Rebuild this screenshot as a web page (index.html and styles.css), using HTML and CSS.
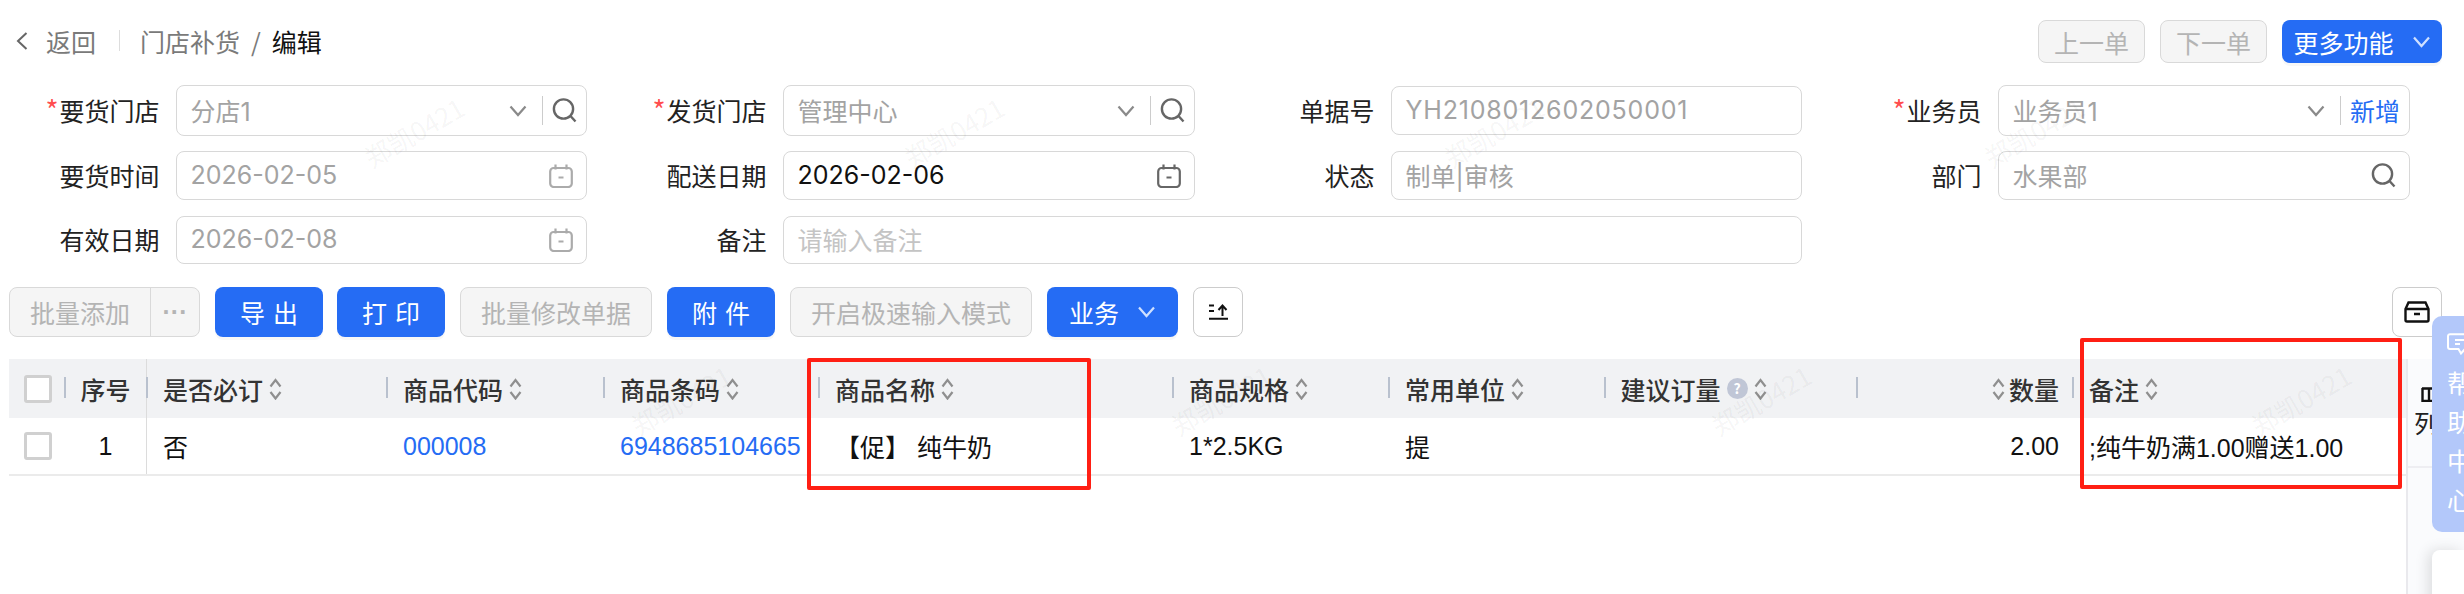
FILE: index.html
```html
<!DOCTYPE html>
<html lang="zh-CN">
<head>
    <meta charset="UTF-8">
    <title>门店补货 / 编辑</title>
    <link rel="stylesheet" href="styles.css">
</head>
<body>
    <svg class="sprite" aria-hidden="true">
        <symbol id="i-chevron" viewBox="0 0 18 12"><path d="M1.5 1.5 9 10l7.5-8.5" fill="none" stroke="currentColor" stroke-width="2.2"/></symbol>
        <symbol id="i-search" viewBox="0 0 25 25"><circle cx="11.5" cy="11" r="9.6" fill="none" stroke="currentColor" stroke-width="2.4"/><path d="m18.5 18 5 5.5" fill="none" stroke="currentColor" stroke-width="2.4"/></symbol>
        <symbol id="i-calendar" viewBox="0 0 24 24"><rect x="1.2" y="4" width="21.6" height="19" rx="3.5" fill="none" stroke="currentColor" stroke-width="2.2"/><path d="M6.5 0.5v5M17.5 0.5v5M9.5 13.5h5" fill="none" stroke="currentColor" stroke-width="2.2"/></symbol>
        <symbol id="i-sort" viewBox="0 0 13 22"><path d="M1.5 8.5 6.5 2l5 6.5M1.5 14 6.5 20.5l5-6.5" fill="none" stroke="currentColor" stroke-width="2.2"/></symbol>
    </svg>

    <div class="page">
        <div class="topbar">
            <div class="crumbs">
                <svg class="crumb-back" width="12" height="18" viewBox="0 0 12 18"><path d="M10.5 1 2 9l8.5 8" fill="none" stroke="currentColor" stroke-width="2"/></svg>
                <span class="crumb-link">返回</span>
                <span class="crumb-divider"></span>
                <span class="crumb-link">门店补货</span>
                <span class="crumb-slash">/</span>
                <span class="crumb-current">编辑</span>
            </div>
            <div class="topbar-actions">
                <button class="btn btn-disabled btn-nav">上一单</button>
                <button class="btn btn-disabled btn-nav">下一单</button>
                <button class="btn btn-primary btn-more">更多功能<svg class="btn-chevron" width="19" height="12"><use href="#i-chevron"/></svg></button>
            </div>
        </div>

        <div class="form-grid">
            <div class="field">
                <label class="field-label"><i>*</i>要货门店</label>
                <div class="input input-tall">
                    <span class="input-value">分店1</span>
                    <svg class="icon-chevron" width="18" height="12"><use href="#i-chevron"/></svg>
                    <span class="input-divider"></span>
                    <svg class="icon-search" width="25" height="25"><use href="#i-search"/></svg>
                </div>
            </div>
            <div class="field">
                <label class="field-label"><i>*</i>发货门店</label>
                <div class="input input-tall">
                    <span class="input-value">管理中心</span>
                    <svg class="icon-chevron" width="18" height="12"><use href="#i-chevron"/></svg>
                    <span class="input-divider"></span>
                    <svg class="icon-search" width="25" height="25"><use href="#i-search"/></svg>
                </div>
            </div>
            <div class="field field-mid">
                <label class="field-label">单据号</label>
                <div class="input"><span class="input-value input-code">YH2108012602050001</span></div>
            </div>
            <div class="field">
                <label class="field-label"><i>*</i>业务员</label>
                <div class="input input-tall">
                    <span class="input-value">业务员1</span>
                    <svg class="icon-chevron" width="18" height="12"><use href="#i-chevron"/></svg>
                    <span class="input-divider"></span>
                    <a class="input-add">新增</a>
                </div>
            </div>

            <div class="field">
                <label class="field-label">要货时间</label>
                <div class="input">
                    <span class="input-value">2026-02-05</span>
                    <svg class="icon-calendar" width="24" height="24"><use href="#i-calendar"/></svg>
                </div>
            </div>
            <div class="field">
                <label class="field-label">配送日期</label>
                <div class="input">
                    <span class="input-value input-filled">2026-02-06</span>
                    <svg class="icon-calendar icon-dark" width="24" height="24"><use href="#i-calendar"/></svg>
                </div>
            </div>
            <div class="field">
                <label class="field-label">状态</label>
                <div class="input"><span class="input-value">制单|审核</span></div>
            </div>
            <div class="field">
                <label class="field-label">部门</label>
                <div class="input">
                    <span class="input-value">水果部</span>
                    <svg class="icon-search icon-alone" width="25" height="25"><use href="#i-search"/></svg>
                </div>
            </div>

            <div class="field">
                <label class="field-label">有效日期</label>
                <div class="input input-short">
                    <span class="input-value">2026-02-08</span>
                    <svg class="icon-calendar" width="24" height="24"><use href="#i-calendar"/></svg>
                </div>
            </div>
            <div class="field field-wide">
                <label class="field-label">备注</label>
                <div class="input input-short"><span class="input-value input-placeholder">请输入备注</span></div>
            </div>
        </div>

        <div class="toolbar">
            <div class="btn-group">
                <button class="btn-group-main">批量添加</button>
                <button class="btn-group-more">···</button>
            </div>
            <button class="btn btn-primary btn-spaced btn-export">导出</button>
            <button class="btn btn-primary btn-spaced">打印</button>
            <button class="btn btn-disabled btn-batch">批量修改单据</button>
            <button class="btn btn-primary btn-spaced">附件</button>
            <button class="btn btn-disabled btn-fast">开启极速输入模式</button>
            <button class="btn btn-primary btn-biz">业务<svg class="btn-chevron" width="19" height="12"><use href="#i-chevron"/></svg></button>
            <button class="btn btn-icon">
                <svg width="20" height="16" viewBox="0 0 20 16"><path d="M1 1.5h5M1 7h5M1 14.8h19M14.5 12V2M10.5 6l4-4.5 4 4.5" fill="none" stroke="#111" stroke-width="2"/></svg>
            </button>
            <button class="btn btn-icon btn-archive">
                <svg width="26" height="22" viewBox="0 0 26 22"><path d="M1.500 8 4.500 1.500h17L24.500 8v11a1.500 1.500 0 0 1-1.500 1.500H3A1.500 1.500 0 0 1 1.500 19zM1.500 8h23M10 13h6" fill="none" stroke="#111" stroke-width="2.400"/></svg>
            </button>
        </div>

        <div class="table-wrap">
            <div class="table">
                <div class="table-row table-head">
                    <div class="cell cell-check"><span class="checkbox"></span></div>
                    <div class="cell cell-seq head-sep">序号</div>
                    <div class="cell head-sep">是否必订<svg class="icon-sort" width="13" height="22"><use href="#i-sort"/></svg></div>
                    <div class="cell head-sep">商品代码<svg class="icon-sort" width="13" height="22"><use href="#i-sort"/></svg></div>
                    <div class="cell head-sep">商品条码<svg class="icon-sort" width="13" height="22"><use href="#i-sort"/></svg></div>
                    <div class="cell head-sep">商品名称<svg class="icon-sort" width="13" height="22"><use href="#i-sort"/></svg></div>
                    <div class="cell head-sep">商品规格<svg class="icon-sort" width="13" height="22"><use href="#i-sort"/></svg></div>
                    <div class="cell head-sep">常用单位<svg class="icon-sort" width="13" height="22"><use href="#i-sort"/></svg></div>
                    <div class="cell head-sep">建议订量<span class="hint">?</span><svg class="icon-sort" width="13" height="22"><use href="#i-sort"/></svg></div>
                    <div class="cell cell-num head-sep"><svg class="icon-sort icon-sort-left" width="13" height="22"><use href="#i-sort"/></svg>数量</div>
                    <div class="cell head-sep">备注<svg class="icon-sort" width="13" height="22"><use href="#i-sort"/></svg></div>
                </div>
                <div class="table-row table-body">
                    <div class="cell cell-check"><span class="checkbox"></span></div>
                    <div class="cell cell-seq">1</div>
                    <div class="cell">否</div>
                    <div class="cell"><a class="link">000008</a></div>
                    <div class="cell"><a class="link">6948685104665</a></div>
                    <div class="cell">【促】 纯牛奶</div>
                    <div class="cell">1*2.5KG</div>
                    <div class="cell">提</div>
                    <div class="cell"></div>
                    <div class="cell cell-num">2.00</div>
                    <div class="cell">;纯牛奶满1.00赠送1.00</div>
                </div>
            </div>
            <div class="col-setting">
                <div class="col-setting-inner">
                    <svg width="22" height="15" viewBox="0 0 22 15"><path d="M1 1.500h20M1.500 1v13h19V1M8 1v13M14.500 1v13" fill="none" stroke="#111" stroke-width="2.400"/></svg>
                    <span>列</span>
                </div>
            </div>
        </div>
    </div>

    <div class="annotation annotation-name"></div>
    <div class="annotation annotation-remark"></div>

    <div class="help-panel">
        <svg width="24" height="22" viewBox="0 0 24 22"><path d="M3 1.200h18a2 2 0 0 1 2 2V14a2 2 0 0 1-2 2h-3l-4 4.500-2.500-4.500H3a2 2 0 0 1-2-2V3.200a2 2 0 0 1 2-2zM8 7h9M8 11h5" fill="none" stroke="#fff" stroke-width="2"/></svg>
        <div class="help-text">帮助中心</div>
    </div>
    <div class="side-card"></div>

    <div class="watermarks">
        <div class="wm-row wm-a"><span>郑凯0421</span><span>郑凯0421</span><span>郑凯0421</span><span>郑凯0421</span></div>
        <div class="wm-row wm-b"><span>郑凯0421</span><span>郑凯0421</span><span>郑凯0421</span><span>郑凯0421</span></div>
        <div class="wm-row wm-faint wm-c"><span>郑凯0421</span><span>郑凯0421</span><span>郑凯0421</span><span>郑凯0421</span><span>郑凯0421</span></div>
        <div class="wm-row wm-faint wm-d"><span>郑凯0421</span><span>郑凯0421</span><span>郑凯0421</span><span>郑凯0421</span><span>郑凯0421</span></div>
        <div class="wm-row wm-faint wm-e"><span>郑凯0421</span><span>郑凯0421</span><span>郑凯0421</span><span>郑凯0421</span><span>郑凯0421</span></div>
    </div>
</body>
</html>
```

FILE: styles.css
```css
html, body {
    margin: 0;
    height: 594px;
    overflow: hidden;
    background: #fff;
}

body {
    position: relative;
    font-family: "Liberation Sans", "Noto Sans CJK SC", sans-serif;
    font-size: 25px;
    color: #222;
}

.sprite {
    position: absolute;
    width: 0;
    height: 0;
}

/* top bar */
.topbar {
    display: flex;
    justify-content: space-between;
    align-items: center;
    height: 43px;
    padding: 20px 22px 0 16px;
}

.crumbs {
    display: flex;
    align-items: center;
    padding-bottom: 2px;
    font-family: "Noto Sans CJK SC", sans-serif;
    color: #7a7a7a;
}

.crumb-back {
    margin-right: 18px;
    color: #666;
}

.crumb-divider {
    width: 1px;
    height: 21px;
    margin: 0 20px 0 23px;
    background: #ddd;
}

.crumb-slash {
    margin: 0 11px;
}

.crumb-current {
    color: #111;
}

.topbar-actions {
    display: flex;
    gap: 15px;
}

.btn {
    display: inline-flex;
    align-items: center;
    justify-content: center;
    box-sizing: border-box;
    height: 50px;
    padding: 0;
    border: 1px solid transparent;
    border-radius: 8px;
    font-family: "Noto Sans CJK SC", sans-serif;
    font-size: 25px;
}

.btn-primary {
    background: #256cf4;
    color: #fff;
    box-shadow: 0 3px 0 rgba(0, 0, 0, 0.03);
}

.btn-disabled {
    background: #f5f5f5;
    border-color: #d9d9d9;
    color: #b4b4b4;
}

.btn-nav {
    width: 107px;
    height: 43px;
}

.btn-more {
    width: 160px;
    height: 43px;
}

.btn-chevron {
    margin-left: 18px;
    color: #cfe0ff;
}

/* form */
.form-grid {
    display: grid;
    grid-template-columns: 587px 588px 587px 588px;
    grid-template-rows: 51px 50px 48px;
    column-gap: 20px;
    row-gap: 15px;
    align-items: start;
    margin-top: 22px;
}

.field {
    display: flex;
    align-items: center;
    gap: 16px;
    font-family: "Noto Sans CJK SC", sans-serif;
}

.field-mid {
    align-self: center;
}

.field-wide {
    grid-column: span 2;
}

.field-label {
    flex: none;
    width: 159.500px;
    padding-bottom: 2px;
    text-align: right;
    color: #222;
}

.field-label i {
    margin-right: 1px;
    font-size: 28px;
    font-style: normal;
    line-height: 1;
    color: #ff4d4f;
}

.input {
    display: flex;
    flex: 1;
    align-items: center;
    box-sizing: border-box;
    height: 49px;
    padding: 0 14px;
    border: 1px solid #d8d8d8;
    border-radius: 8px;
    background: #fff;
    font-family: Inter, "Noto Sans CJK SC", sans-serif;
    color: #a3a3a3;
}

.input-tall {
    height: 51px;
    padding-right: 9px;
}

.input-short {
    height: 48px;
}

.input-value {
    flex: 1;
    padding-bottom: 2px;
    white-space: nowrap;
}

.input-code {
    letter-spacing: 0.800px;
}

.input-filled {
    color: #111;
}

.input-placeholder {
    color: #c4c4c4;
}

.input-divider {
    width: 1px;
    height: 29px;
    margin: 0 9px 0 15px;
    background: #ccc;
}

.input-add {
    padding-bottom: 2px;
    font-family: "Noto Sans CJK SC", sans-serif;
    color: #256cf4;
}

.icon-chevron {
    color: #8a8a8a;
}

.icon-search {
    color: #666;
}

.icon-alone {
    margin-right: -1px;
}

.icon-calendar {
    margin-right: -1px;
    color: #ababab;
}

.icon-dark {
    color: #666;
}

/* toolbar */
.toolbar {
    display: flex;
    gap: 15px;
    margin-top: 23px;
    padding: 0 22px 0 9px;
}

.btn-group {
    display: flex;
    box-sizing: border-box;
    width: 191px;
    height: 50px;
    border: 1px solid #d9d9d9;
    border-radius: 8px;
    background: #f5f5f5;
    overflow: hidden;
}

.btn-group button {
    padding: 0;
    border: 0;
    background: none;
    font-size: 25px;
    color: #b4b4b4;
}

.btn-group-main {
    flex: none;
    width: 141px;
    font-family: "Noto Sans CJK SC", sans-serif;
    border-right: 1px solid #d9d9d9 !important;
}

.btn-group-more {
    flex: 1;
    font-family: "Liberation Sans", sans-serif;
    font-weight: 700;
}

.btn-spaced {
    width: 108px;
    letter-spacing: 8px;
    text-indent: 8px;
}

.btn-export {
    margin-right: -1px;
}

.btn-batch {
    width: 192px;
}

.btn-fast {
    width: 242px;
}

.btn-biz {
    width: 131px;
}

.btn-icon {
    width: 50px;
    background: #fff;
    border-color: #ccc;
}

.btn-archive {
    margin-left: auto;
}

/* table */
.table-wrap {
    display: flex;
    height: 235px;
    margin-top: 22px;
    padding-left: 9px;
}

.table {
    width: 2397px;
    flex: none;
}

.table-row {
    display: grid;
    grid-template-columns: 56px 82px 240px 217px 215px 354px 216px 215.500px 252.500px 216px 333px;
    box-sizing: border-box;
}

.table-head {
    height: 59px;
    background: #f1f2f4;
    font-family: "Noto Sans CJK SC", sans-serif;
    font-weight: 500;
    color: #333;
}

.table-body {
    height: 58px;
    border-bottom: 2px solid #ebebeb;
    color: #111;
}

.cell {
    position: relative;
    display: flex;
    align-items: center;
    padding-left: 16px;
    white-space: nowrap;
}

.cell-check {
    padding-left: 15px;
}

.cell-seq {
    justify-content: center;
    padding-left: 0;
    border-right: 1px solid #dcdcdc;
}

.cell-num {
    justify-content: flex-end;
    padding-right: 14px;
}

.head-sep::before {
    content: "";
    position: absolute;
    left: -1px;
    top: 18px;
    width: 2px;
    height: 21px;
    background: #b9c1ce;
}

.checkbox {
    display: block;
    box-sizing: border-box;
    width: 28px;
    height: 28px;
    border: 3px solid #d0d0d0;
    border-radius: 3px;
    background: #fff;
}

.link {
    color: #256cf4;
}

.icon-sort {
    flex: none;
    margin-left: 6px;
    color: #8f8f8f;
}

.icon-sort-left {
    margin: 0 4px 0 0;
}

.hint {
    flex: none;
    width: 21px;
    height: 21px;
    margin-left: 6px;
    border-radius: 50%;
    background: #c0c6d6;
    font-size: 14px;
    font-weight: 700;
    line-height: 21px;
    text-align: center;
    color: #fff;
}

.col-setting {
    flex: 1;
    border-left: 2px solid #e9e9ed;
    background: #fafbfd;
    overflow: hidden;
}

.col-setting-inner {
    box-sizing: border-box;
    width: 26px;
    height: 107px;
    margin-left: 6px;
    padding-top: 28px;
    font-family: "Noto Sans CJK SC", sans-serif;
    line-height: 30px;
    color: #222;
}

.col-setting-inner svg {
    display: block;
    margin: 0 0 5px 7px;
}

.col-setting::after {
    content: "";
    display: block;
    height: 2px;
    background: #eeeef2;
}

/* red boxes drawn over the screenshot */
.annotation {
    position: absolute;
    box-sizing: border-box;
    border: 4px solid #ff1f14;
    border-radius: 2px;
    pointer-events: none;
}

.annotation-name {
    left: 807px;
    top: 358px;
    width: 284px;
    height: 132px;
}

.annotation-remark {
    left: 2080px;
    top: 338px;
    width: 322px;
    height: 151px;
}

/* floating help tab */
.help-panel {
    position: absolute;
    right: 0;
    top: 316px;
    box-sizing: border-box;
    width: 32px;
    height: 216px;
    padding: 17px 0 0 15px;
    border-radius: 10px 0 0 10px;
    background: #b3c8fa;
    overflow: hidden;
}

.help-panel svg {
    display: block;
}

.help-text {
    width: 25px;
    margin-top: 8px;
    font-family: "Noto Sans CJK SC", sans-serif;
    line-height: 39px;
    color: #fff;
}

.side-card {
    position: absolute;
    right: 0;
    top: 550px;
    width: 32px;
    height: 60px;
    border-radius: 8px 0 0 0;
    background: #fff;
    box-shadow: -4px 0 14px rgba(0, 0, 0, 0.12);
}

/* watermark */
.watermarks {
    position: absolute;
    inset: 0;
    overflow: hidden;
    pointer-events: none;
}

.wm-row {
    position: absolute;
    display: flex;
    font-family: "Noto Sans CJK SC", sans-serif;
    font-size: 26px;
    line-height: 40px;
    color: rgba(0, 0, 0, 0.05);
}

.wm-row span {
    flex: none;
    width: 540px;
    text-align: center;
    transform: rotate(-30deg);
}

.wm-a {
    left: 144px;
    top: 112px;
}

.wm-b {
    left: 411px;
    top: 380px;
}

.wm-faint {
    color: rgba(0, 0, 0, 0.02);
}

.wm-faint span {
    width: 436px;
}

.wm-c {
    left: 254px;
    top: 37px;
}

.wm-d {
    left: 345px;
    top: 228px;
}

.wm-e {
    left: 345px;
    top: 487px;
}
```
